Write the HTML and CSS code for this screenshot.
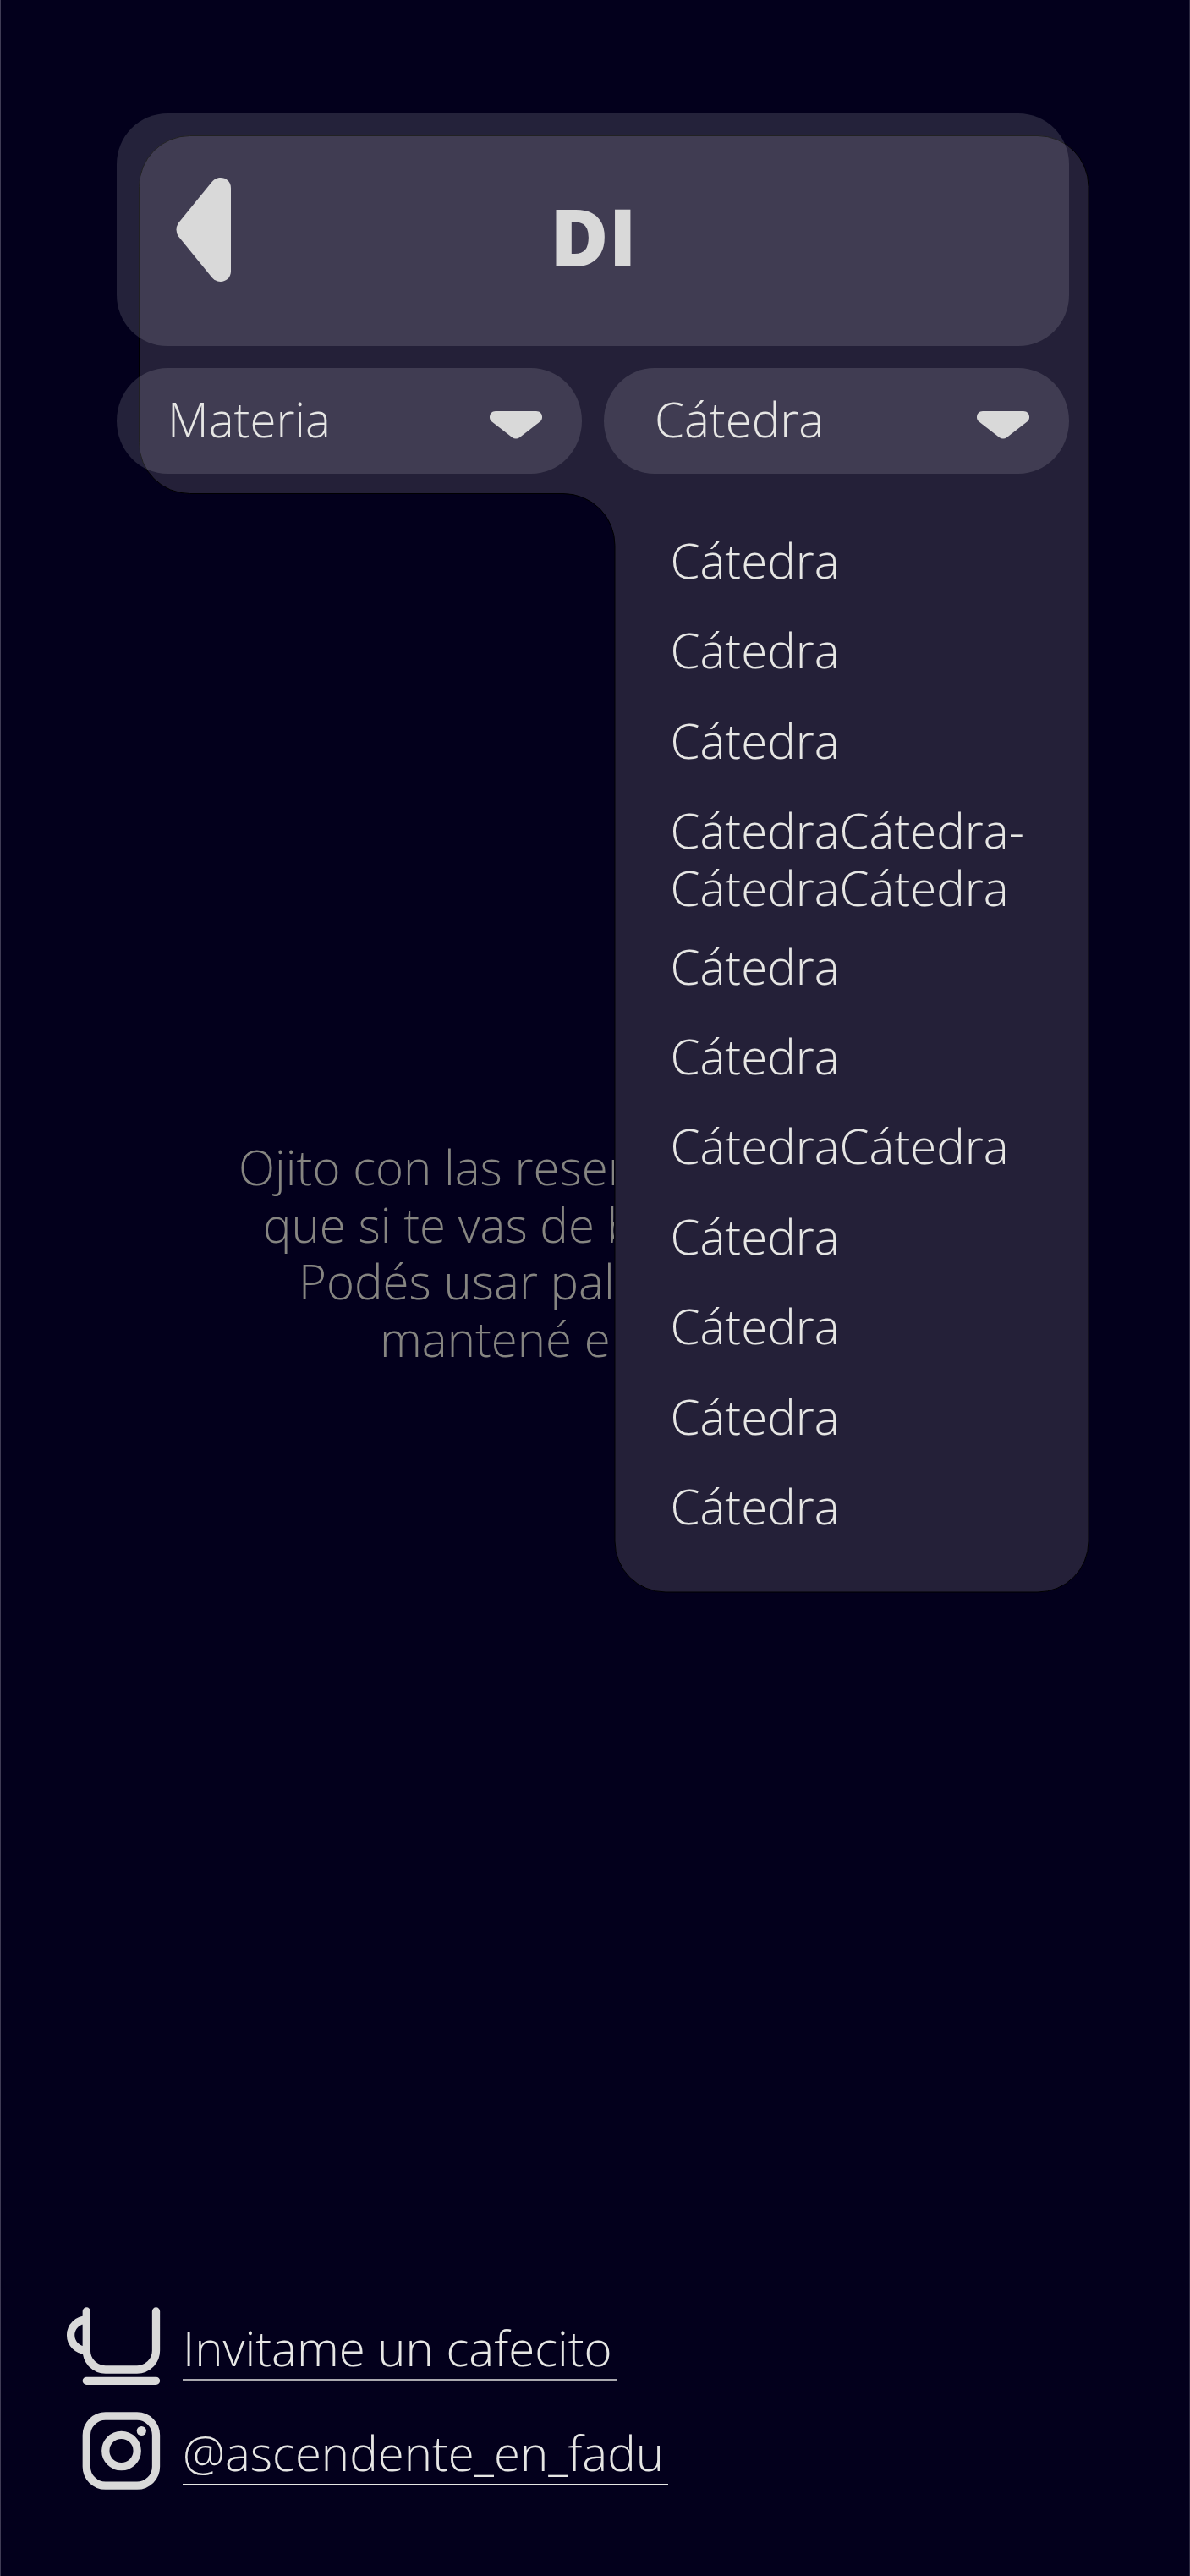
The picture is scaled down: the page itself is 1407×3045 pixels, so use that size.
FILE: index.html
```
<!DOCTYPE html>
<html lang="es">
<head>
<meta charset="utf-8">
<title>DI</title>
<link rel="stylesheet" href="styles.css">
</head>
<body>
<main class="page">
  <div class="top">
    <svg class="panel" width="1124" height="1723" viewBox="0 0 1124 1723" aria-hidden="true">
      <path d="M60.5 .5H1063A60 60 0 0 1 1123 60.5V1662A60 60 0 0 1 1063 1722H623A60 60 0 0 1 563 1662V484.500A61 61 0 0 0 502 423.500H60.5A60 60 0 0 1 .5 363.500V60.5A60 60 0 0 1 60.5 .5Z"/>
    </svg>
    <header class="header">
      <svg class="back" width="66" height="124" viewBox="0 0 66 124"><path d="M42.500 5C50 -4 65 0 65 12.500V110.500C65 123 50 127 42.500 118L3 69.500Q-2 61.500 3 53.500Z"/></svg>
      <h1 class="title">DI</h1>
    </header>
    <div class="filters">
      <button class="select"><span class="label">Materia</span><svg class="caret" width="62" height="33" viewBox="0 0 62 33"><path d="M7 0H55C62 0 64 8 60 12L35.500 31Q31 34 26.500 31L2 12C-2 8 0 0 7 0Z"/></svg></button>
      <button class="select"><span class="label">Cátedra</span><svg class="caret" width="62" height="33" viewBox="0 0 62 33"><path d="M7 0H55C62 0 64 8 60 12L35.500 31Q31 34 26.500 31L2 12C-2 8 0 0 7 0Z"/></svg></button>
    </div>
  </div>
  <section class="content">
    <div class="notice">
      <p class="line line-1">Ojito con las reser</p>
      <p class="line line-2">que si te vas de b</p>
      <p class="line line-3">Podés usar pal</p>
      <p class="line line-4">mantené e</p>
    </div>
    <ul class="options">
      <li>Cátedra</li>
      <li>Cátedra</li>
      <li>Cátedra</li>
      <li class="double">CátedraCátedra-<br>CátedraCátedra</li>
      <li>Cátedra</li>
      <li>Cátedra</li>
      <li>CátedraCátedra</li>
      <li>Cátedra</li>
      <li>Cátedra</li>
      <li>Cátedra</li>
      <li>Cátedra</li>
    </ul>
  </section>
  <footer class="footer">
    <div class="social">
      <svg class="icon" width="112" height="93" viewBox="0 0 112 93"><path d="M24.300 5V51.500A22.500 22.500 0 0 0 46.800 74H84A22.500 22.500 0 0 0 106.500 51.500V5M24.300 87.300H106.500M24.300 15A18.700 18.200 0 0 0 24.300 51.400"/></svg>
      <a class="link link-coffee">Invitame un cafecito</a>
    </div>
    <div class="social">
      <svg class="icon" width="112" height="93" viewBox="0 0 112 93"><rect x="24.300" y="5" width="82.200" height="82.200" rx="22.500"/><circle cx="65.500" cy="46" r="18.700"/><circle class="dot" cx="89.300" cy="22.500" r="5.600"/></svg>
      <a class="link link-insta">@ascendente_en_fadu</a>
    </div>
  </footer>
</main>
</body>
</html>
```
FILE: styles.css
```
* { box-sizing: border-box; }

body {
  margin: 0;
  background: #03001c;
  color: #e6e6e4;
  font: 300 56.400px/67.600px "Open Sans", sans-serif;
}

.page {
  display: flex;
  flex-direction: column;
  height: 3045px;
  border-left: 1px solid #403c55;
  border-right: 1px solid #2a2840;
}

.top {
  position: relative;
  display: flex;
  flex-direction: column;
  gap: 26px;
  padding: 134px 142px 0 137px;
}

.panel {
  position: absolute;
  left: 163px;
  top: 160px;
  fill: #242038;
  stroke: #000;
}

.header {
  position: relative;
  display: flex;
  align-items: flex-start;
  height: 275px;
  padding: 76px 70px 0;
  border-radius: 60px;
  background: rgba(211, 212, 220, .16);
}

.back, .caret { fill: #d9d9d9; flex: none; }

.title {
  flex: 1;
  margin: 14px 0 0;
  padding-right: 65px;
  color: #d9d9d9;
  font-size: 94.500px;
  font-weight: 800;
  line-height: 110px;
  text-align: center;
}

.filters { position: relative; display: flex; gap: 26px; }

.select {
  display: flex;
  flex: 1;
  align-items: center;
  justify-content: space-between;
  height: 125px;
  padding: 0 47px 0 60px;
  border: 0;
  border-radius: 60px / 62.500px;
  background: rgba(211, 212, 220, .16);
  color: inherit;
  font: inherit;
}

.label { margin-bottom: 4px; }

.caret { margin-top: 9px; }

.content { position: relative; display: flex; height: 1322px; }

.notice {
  width: 725px;
  padding-top: 786px;
  overflow: hidden;
  color: #868581;
  white-space: nowrap;
}

.line { margin: 0; }
.line-1 { padding-left: 281px; }
.line-2 { padding-left: 310px; }
.line-3 { padding-left: 352px; }
.line-4 { padding-left: 448px; }

.options {
  display: flex;
  flex-direction: column;
  gap: 38.800px;
  margin: 0;
  padding: 69px 0 0 66.500px;
  list-style: none;
}

.double { margin-bottom: -13.500px; }

.footer {
  display: flex;
  flex-direction: column;
  gap: 31px;
  margin-top: auto;
  padding: 0 0 101px 77px;
}

.social { display: flex; align-items: flex-start; height: 93px; gap: 26px; }

.icon {
  flex: none;
  overflow: visible;
  fill: none;
  stroke: #d9d9d9;
  stroke-width: 9.300px;
  stroke-linecap: round;
}

.dot { fill: #d9d9d9; stroke: none; }

.link {
  height: 72px;
  margin-top: 15px;
  white-space: nowrap;
}

.link-coffee { width: 513px; border-bottom: 2px solid #a9a8ae; }
.link-insta { width: 574px; height: 71px; border-bottom: 1px solid #e6e6e4; }
```
